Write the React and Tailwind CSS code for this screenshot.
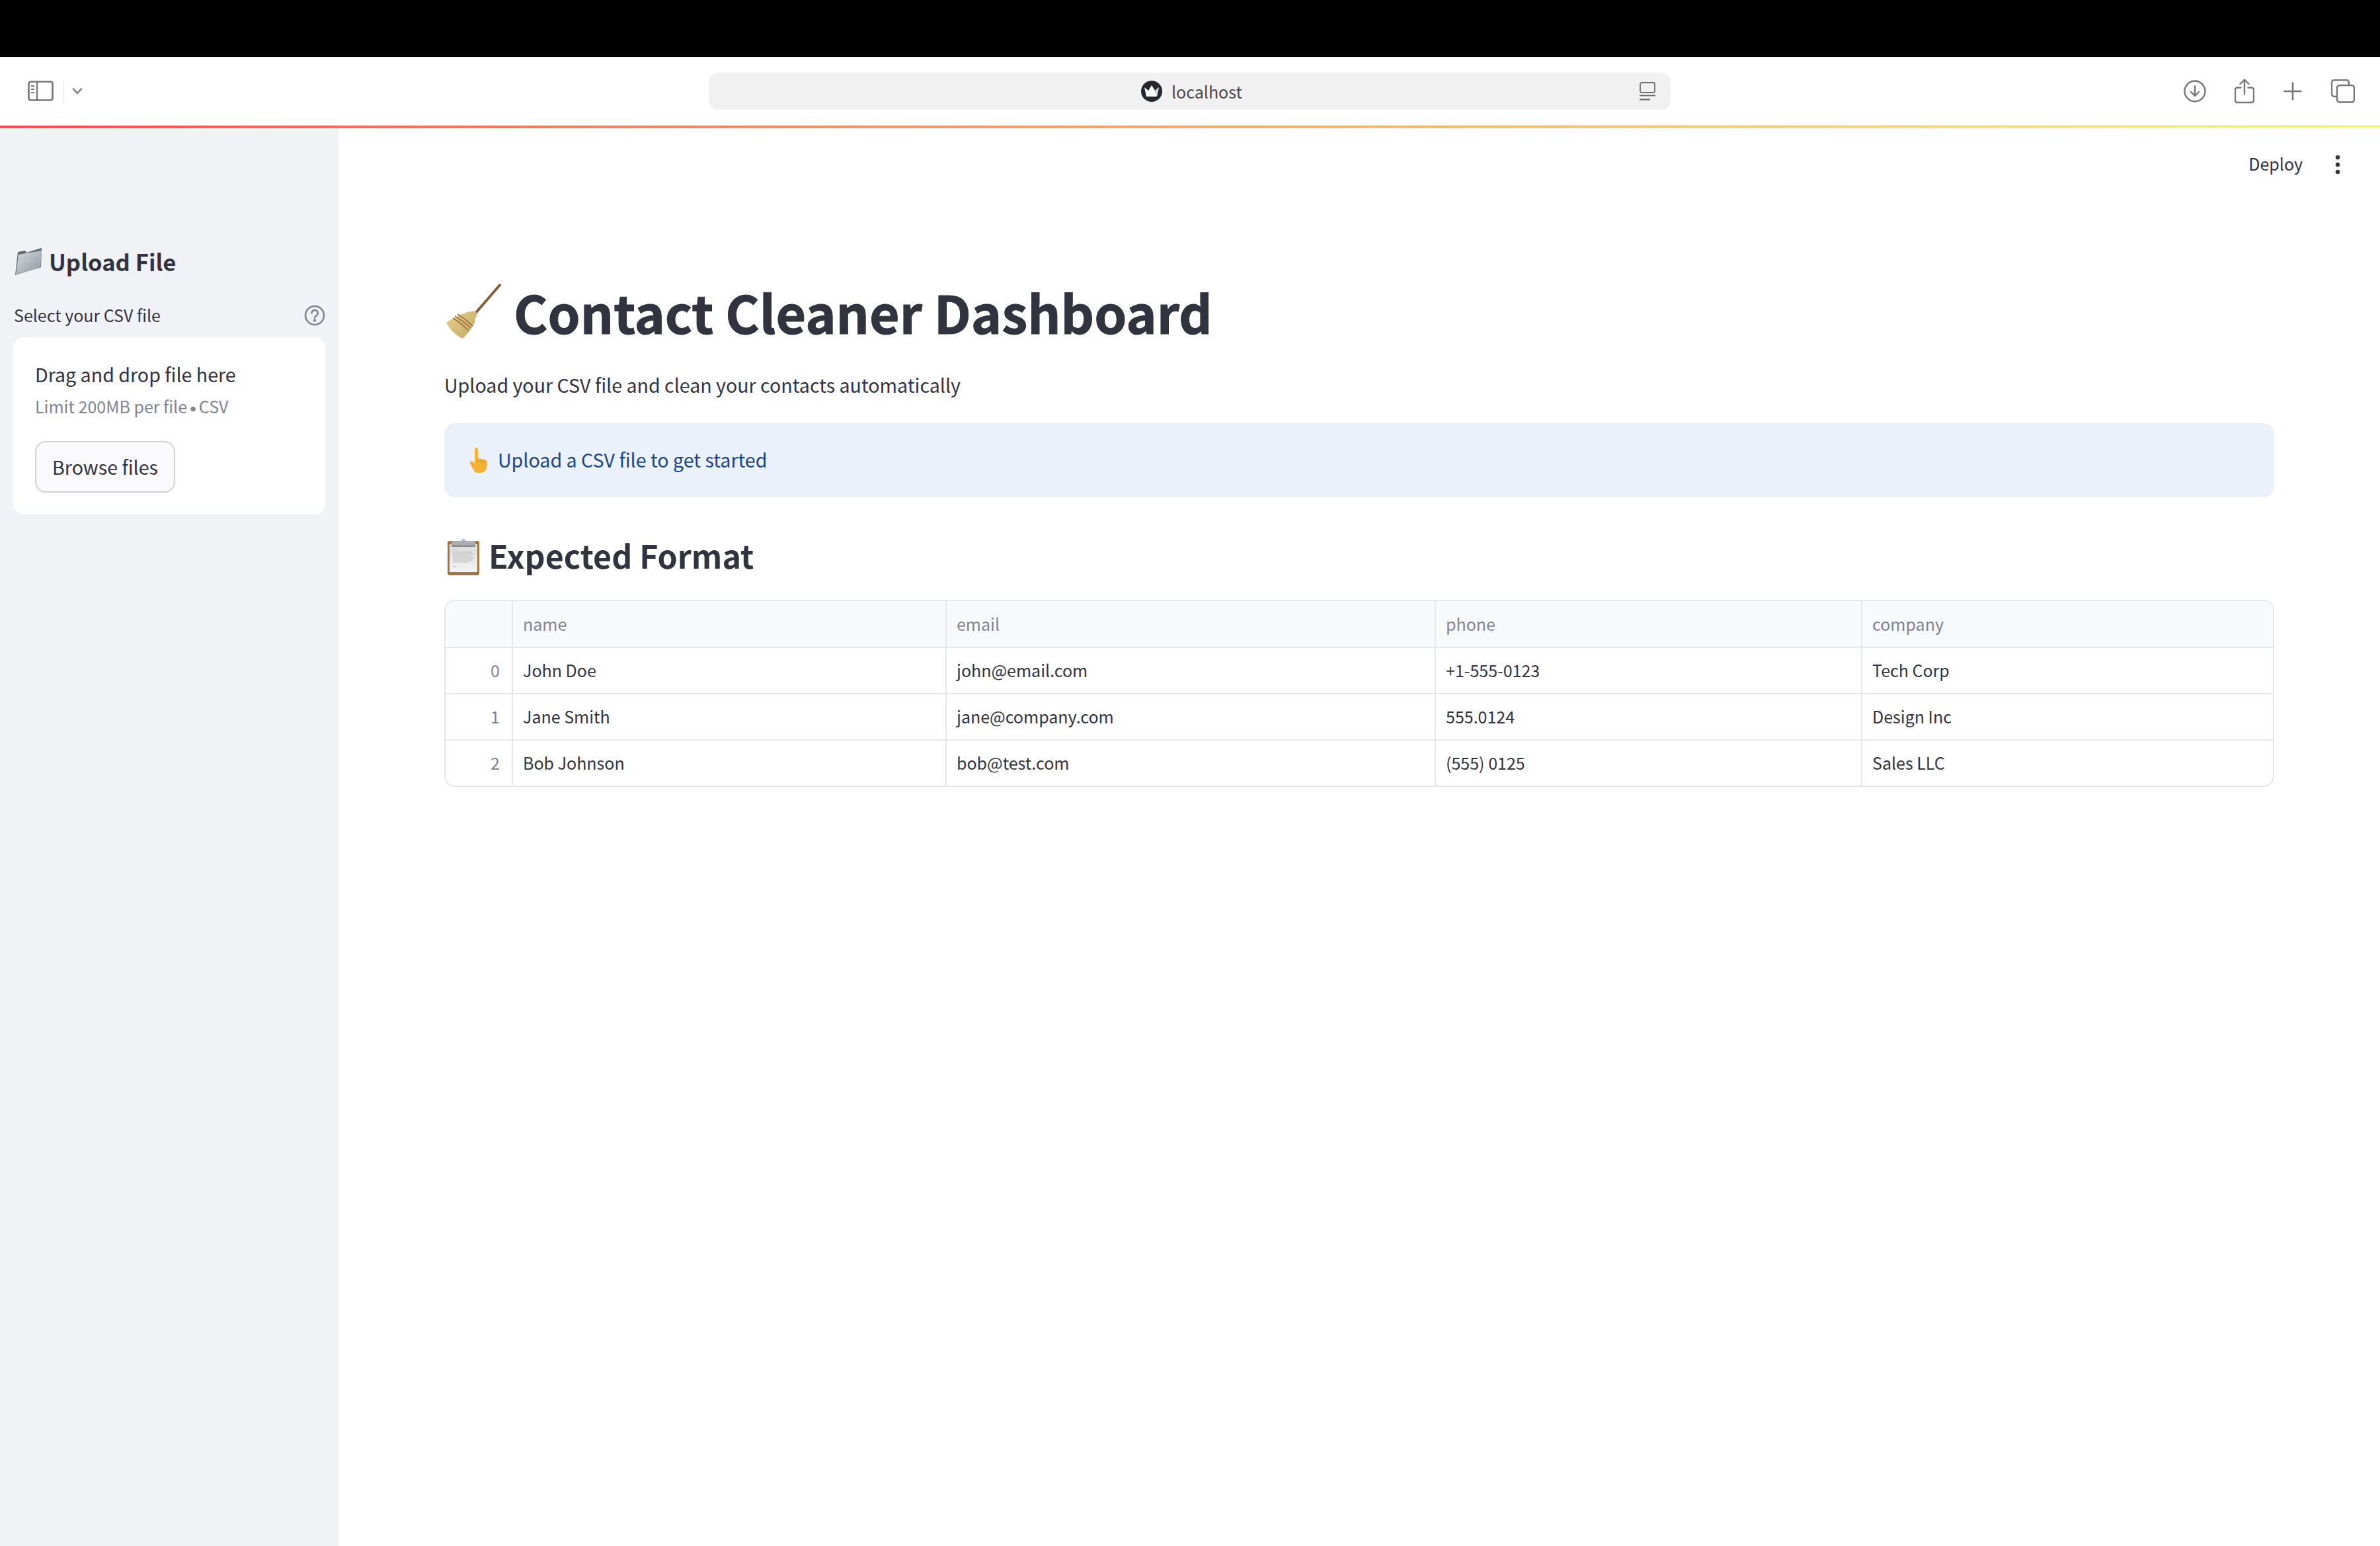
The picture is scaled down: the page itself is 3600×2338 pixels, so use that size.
import React from 'react';

const sans = "font-['Noto_Sans_CJK_SC','Noto_Sans',sans-serif]";

const columns = ['name', 'email', 'phone', 'company'];
const rows = [
  ['0', 'John Doe', 'john@email.com', '+1-555-0123', 'Tech Corp'],
  ['1', 'Jane Smith', 'jane@company.com', '555.0124', 'Design Inc'],
  ['2', 'Bob Johnson', 'bob@test.com', '(555) 0125', 'Sales LLC'],
];
const gridCols = 'grid grid-cols-[102px_656px_740px_645px_1fr]';

// Browser toolbar icons
function SidebarIcon() {
  return (
    <svg width="40" height="32" viewBox="0 0 40 32" fill="none" stroke="#767676">
      <rect x="1.5" y="1.5" width="36" height="28" rx="3" strokeWidth="2.6" />
      <path d="M14 2v28" strokeWidth="2.2" />
      <path d="M5 8h5M5 13h5M5 18h5" strokeWidth="1.8" />
    </svg>
  );
}

function Chevron() {
  return (
    <svg width="16" height="12" viewBox="0 0 16 12" fill="none" stroke="#8c8c8f" strokeWidth="2.6" strokeLinecap="round" strokeLinejoin="round">
      <path d="M2 2.5l6 6.5 6-6.5" />
    </svg>
  );
}

function LogoIcon() {
  return (
    <svg width="32" height="32" viewBox="0 0 32 32">
      <circle cx="16" cy="16" r="16" fill="#26272e" />
      <path d="M5 10l6 5 5-8 5 8 6-5-3 14H8z" fill="#fff" />
      <path d="M16 7l5 8 6-5-3 14z" fill="#d4d4d8" />
    </svg>
  );
}

function ReaderIcon() {
  return (
    <svg width="24" height="28" viewBox="0 0 24 28" fill="none" stroke="#6e6e6e">
      <rect x="1" y="1" width="22" height="15" rx="2.5" strokeWidth="1.8" />
      <path d="M0 20.5h24" strokeWidth="1.8" />
      <path d="M0 26.5h16" strokeWidth="2.2" />
    </svg>
  );
}

function DownloadIcon() {
  return (
    <svg width="34" height="34" viewBox="0 0 34 34" fill="none" stroke="#767676" strokeWidth="2.4" strokeLinecap="round" strokeLinejoin="round">
      <circle cx="17" cy="17" r="15.5" />
      <path d="M17 9.5v14M11 18l6 6 6-6" />
    </svg>
  );
}

function ShareIcon() {
  return (
    <svg width="30" height="38" viewBox="0 0 30 38" fill="none" stroke="#767676" strokeWidth="2.4" strokeLinecap="round" strokeLinejoin="round">
      <path d="M15 2v21M8.5 8L15 1.5 21.5 8" />
      <path d="M9.5 13.5H4a3 3 0 0 0-3 3V33a3 3 0 0 0 3 3h22a3 3 0 0 0 3-3V16.5a3 3 0 0 0-3-3h-5.5" />
    </svg>
  );
}

function PlusIcon() {
  return (
    <svg width="28" height="28" viewBox="0 0 28 28" fill="none" stroke="#767676" strokeWidth="2.6" strokeLinecap="round">
      <path d="M14 1.5v25M1.5 14h25" />
    </svg>
  );
}

function TabsIcon() {
  return (
    <svg width="36" height="36" viewBox="0 0 36 36" fill="none" stroke="#767676" strokeWidth="2.4" strokeLinejoin="round">
      <path d="M8 26H5a4 4 0 0 1-4-4V5a4 4 0 0 1 4-4h18a4 4 0 0 1 4 4v3" />
      <rect x="9" y="9" width="26" height="25.5" rx="4" />
    </svg>
  );
}

function Kebab() {
  return (
    <svg width="8" height="30" viewBox="0 0 8 30" fill="#31333f">
      <circle cx="4" cy="4" r="3.2" />
      <circle cx="4" cy="15" r="3.2" />
      <circle cx="4" cy="26" r="3.2" />
    </svg>
  );
}

function HelpIcon() {
  return (
    <svg width="32" height="32" viewBox="0 0 32 32" fill="none" stroke="#808495" strokeWidth="2.6" strokeLinecap="round">
      <circle cx="16" cy="16" r="14" />
      <path d="M11.5 12.5a4.6 4.6 0 1 1 7 3.9c-1.6 1-2.5 1.8-2.5 3.2" />
      <circle cx="16" cy="23.5" r="0.9" fill="#808495" />
    </svg>
  );
}

// Emoji drawings
function FolderEmoji() {
  return (
    <svg width="42" height="42" viewBox="0 0 42 42">
      <defs>
        <linearGradient id="folderFace" x1="0" y1="0" x2="1" y2="1">
          <stop offset="0" stopColor="#d6dade" />
          <stop offset="1" stopColor="#8f979e" />
        </linearGradient>
      </defs>
      <path d="M5 6l11-2 2 3 23-7-1 29L1 41z" fill="#5d6a74" />
      <path d="M6 10l35-6-2 26L2 40z" fill="url(#folderFace)" />
    </svg>
  );
}

function BroomEmoji() {
  return (
    <svg width="90" height="86" viewBox="0 0 90 86" className="mb-[8px]">
      <defs>
        <linearGradient id="straw" x1="0" y1="0" x2="1" y2="1">
          <stop offset="0" stopColor="#e4d294" />
          <stop offset="1" stopColor="#c4a960" />
        </linearGradient>
      </defs>
      <path d="M84 3L46 47" stroke="#85603a" strokeWidth="4" strokeLinecap="round" />
      <path d="M38 43C28 46 14 52 3 60c5 10 15 20 25 24 8-8 16-18 18-25 2-5 1-11-2-15z" fill="url(#straw)" />
      <path d="M20 47c8 5 16 11 23 18M16 50c8 5 17 11 24 18M13 53c8 5 17 12 24 19" stroke="#a36b3a" strokeWidth="1.5" fill="none" />
      <circle cx="44" cy="48" r="5.5" fill="#d1bb74" />
    </svg>
  );
}

function PointingEmoji() {
  return (
    <svg width="28" height="38" viewBox="0 0 28 38">
      <path d="M8 3c0-4 5-4 5 0v13l10 2c3 1 4 3 4 6l-1 7c-1 4-4 7-9 7h-3c-4 0-7-2-8-5L1 24c-1-3 2-5 4-3l3 3z" fill="#f5b335" />
      <path d="M13 17v6M18 18v6M23 19v5" stroke="#d98f1d" strokeWidth="1.2" fill="none" />
    </svg>
  );
}

function ClipboardEmoji() {
  return (
    <svg width="48" height="56" viewBox="0 0 48 56">
      <defs>
        <linearGradient id="paper" x1="0" y1="0" x2="0" y2="1">
          <stop offset="0" stopColor="#dcdcdc" />
          <stop offset="1" stopColor="#f4f4f4" />
        </linearGradient>
      </defs>
      <rect x="0" y="4" width="48" height="52" rx="3" fill="#a2763f" />
      <rect x="3" y="9" width="42" height="42" fill="url(#paper)" />
      <rect x="6" y="4" width="36" height="8" rx="1.5" fill="#a9adb2" />
      <path d="M6 12h36" stroke="#6d6d6d" strokeWidth="1.5" />
      <path d="M20 4l4-4 4 4z" fill="#a8bcd0" />
      <path d="M8 17h8M8 21h30M8 24h32M8 27h28M8 30h32M8 33h30M8 36h24M8 43h6" stroke="#b5b5b5" strokeWidth="1" />
    </svg>
  );
}

function Sidebar() {
  return (
    <aside className="w-[512px] shrink-0 bg-[#f0f2f6] px-[20px] pt-[172px] text-[#31333f]">
      <div className="h-[60px] flex items-center gap-[10px] pl-[2px]">
        <FolderEmoji />
        <h3 className="text-[34.6px] leading-[56px] font-semibold pb-[3px]">Upload File</h3>
      </div>
      <div className="mt-[31px] h-[40px] flex items-center justify-between pl-[1px]">
        <span className="text-[25px] leading-[36px] pb-[3px]">Select your CSV file</span>
        <HelpIcon />
      </div>
      <div className="mt-[13px] w-[472px] bg-white rounded-[16px] pt-[36px] pb-[33px] px-[33px]">
        <div className="text-[28.6px] leading-[40px]">Drag and drop file here</div>
        <div className="mt-[10px] h-[36px] text-[25px] leading-[36px] text-[#808495]">
          Limit 200MB per file <span className="font-['Lato',sans-serif] text-[20px] leading-none -mx-[2.5px]">•</span> CSV
        </div>
        <button className="mt-[35px] block w-[212px] h-[78px] rounded-[16px] border-2 border-[#d0d1d6] bg-[#fafafc] text-[28.6px] leading-[40px] text-[#31333f]">
          Browse files
        </button>
      </div>
    </aside>
  );
}

function DataTable() {
  return (
    <div className="mt-[25px] rounded-[16px] border-2 border-[#e6e7ea] overflow-hidden text-[25px]">
      <div className={`${gridCols} h-[71px] bg-[#f8f9fb] text-[#808495] border-b-2 border-[#e6e7ea]`}>
        <div className="border-r-2 border-[#e6e7ea]" />
        {columns.map((c, i) => (
          <div key={c} className={`flex items-center px-[15px] ${i < 3 ? 'border-r-2 border-[#e6e7ea]' : ''}`}>{c}</div>
        ))}
      </div>
      {rows.map((row, r) => (
        <div key={row[0]} className={`${gridCols} text-[#31333f] ${r < 2 ? 'h-[70px] border-b-2 border-[#e6e7ea]' : 'h-[68px]'}`}>
          <div className="flex items-center justify-end pr-[18px] text-[#808495] border-r-2 border-[#e6e7ea]">{row[0]}</div>
          {row.slice(1).map((cell, i) => (
            <div key={cell} className={`flex items-center px-[15px] ${i < 3 ? 'border-r-2 border-[#e6e7ea]' : ''}`}>{cell}</div>
          ))}
        </div>
      ))}
    </div>
  );
}

export default function App() {
  return (
    <div className={`w-[3600px] h-[2338px] overflow-hidden flex flex-col bg-white ${sans}`}>
      {/* Browser chrome */}
      <div className="h-[86px] bg-black shrink-0" />
      <div className="h-[104px] shrink-0 flex items-center">
        <div className="w-[1072px] pl-[42px] flex items-center">
          <SidebarIcon />
          <div className="ml-[13px] w-[2px] h-[36px] bg-[#f0f0f0]" />
          <div className="ml-[12px]"><Chevron /></div>
        </div>
        <div className="w-[1455px] h-[56px] rounded-[14px] bg-[#f1f1f1] flex items-center pr-[23px]">
          <div className="flex-1 flex items-center gap-[14px] pl-[654px]">
            <LogoIcon />
            <span className="text-[25px] leading-[36px] text-[#4a4a4a]">localhost</span>
          </div>
          <ReaderIcon />
        </div>
        <div className="flex-1 flex items-center pl-[776px]">
          <DownloadIcon />
          <div className="ml-[43px]"><ShareIcon /></div>
          <div className="ml-[44px]"><PlusIcon /></div>
          <div className="ml-[44px]"><TabsIcon /></div>
        </div>
      </div>
      <div className="h-[4px] shrink-0 bg-gradient-to-r from-[#ff4b4b] to-[#fffd80] border-t border-black/20" />

      <div className="flex-1 flex">
        <Sidebar />
        <main className="flex-1 min-w-0 text-[#31333f]">
          <div className="h-[108px] flex items-center justify-end pr-[60px] gap-[49px]">
            <span className="text-[25px] leading-[36px] pb-[2px]">Deploy</span>
            <div className="mt-[2px]"><Kebab /></div>
          </div>
          <div className="px-[160px] mt-[113px]">
            <div className="h-[120px] flex items-center gap-[15px]">
              <BroomEmoji />
              <h1 className="text-[78.6px] leading-[112px] font-bold pb-[8px] [-webkit-text-stroke:1px_#31333f]">Contact Cleaner Dashboard</h1>
            </div>
            <p className="mt-[25px] text-[28.6px] leading-[44px]">Upload your CSV file and clean your contacts automatically</p>
            <div className="mt-[36px] h-[112px] rounded-[16px] bg-[#eaf1fb] flex items-center pl-[38px] gap-[15px] text-[#1b4586]">
              <PointingEmoji />
              <span className="text-[28.6px] leading-[44px] pb-[3px]">Upload a CSV file to get started</span>
            </div>
            <div className="mt-[50px] h-[80px] flex items-center gap-[14px] pl-[5px]">
              <ClipboardEmoji />
              <h2 className="text-[48.3px] leading-[72px] font-semibold pb-[6px]">Expected Format</h2>
            </div>
            <DataTable />
          </div>
        </main>
      </div>
    </div>
  );
}
